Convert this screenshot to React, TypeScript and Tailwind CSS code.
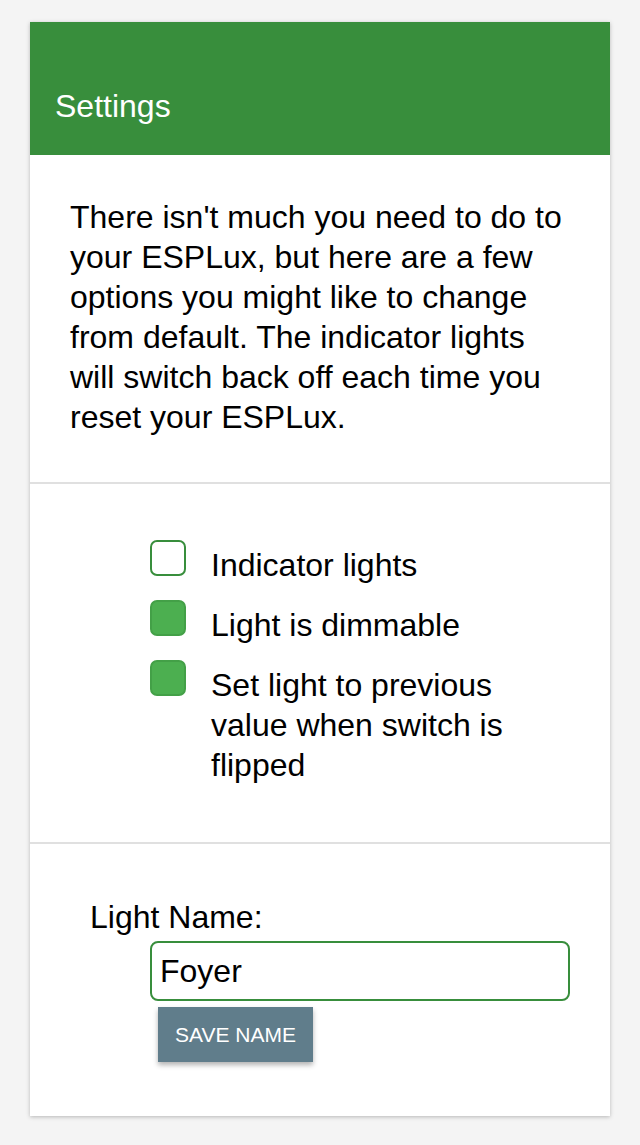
const font = { fontFamily: '"Liberation Sans", Arial, sans-serif' };

type Option = { label: string; checked: boolean };

const options: Option[] = [
  { label: 'Indicator lights', checked: false },
  { label: 'Light is dimmable', checked: true },
  { label: 'Set light to previous value when switch is flipped', checked: true },
];

function Checkbox({ checked }: { checked: boolean }) {
  return (
    <span
      className={
        checked
          ? 'mt-[-5px] block h-[36px] w-[36px] shrink-0 rounded-[7px] border-2 border-[#43a047] bg-[#4caf50]'
          : 'mt-[-5px] block h-[36px] w-[36px] shrink-0 rounded-[7px] border-2 border-[#388e3c] bg-white'
      }
    />
  );
}

export default function App() {
  return (
    <div className="min-h-[1145px] bg-[#f4f4f4] pt-[22px]" style={font}>
      <div className="mx-[30px] bg-white shadow-[0_1px_4px_rgba(0,0,0,0.25)]">
        <div className="bg-[#388e3c] pb-[29px] pl-[25px] pt-[64px] text-[32px] leading-[40px] text-white">
          Settings
        </div>

        <div className="border-b-2 border-[#e0e0e0] px-[40px] pb-[45px] pt-[42px] text-[32px] leading-[40px] text-black">
          There isn't much you need to do to your ESPLux, but here are a few options you might
          like to change from default. The indicator lights will switch back off each time you
          reset your ESPLux.
        </div>

        <div className="flex flex-col gap-[20px] border-b-2 border-[#e0e0e0] pb-[57px] pl-[120px] pt-[61px]">
          {options.map((opt) => (
            <label key={opt.label} className="flex items-start gap-[25px]">
              <Checkbox checked={opt.checked} />
              <span className="w-[300px] text-[32px] leading-[40px] text-black">{opt.label}</span>
            </label>
          ))}
        </div>

        <div className="pb-[54px] pl-[60px] pt-[53px]">
          <div className="text-[32px] leading-[40px] text-black">Light Name:</div>
          <div className="mt-[4px] pl-[60px]">
            <input
              type="text"
              defaultValue="Foyer"
              className="h-[60px] w-[420px] rounded-[8px] border-2 border-[#388e3c] bg-white px-[8px] text-[32px] text-black outline-none"
              style={font}
            />
            <button
              className="ml-[8px] mt-[6px] block h-[55px] w-[155px] bg-[#607d8b] text-[21px] uppercase text-white shadow-[0_3px_5px_rgba(0,0,0,0.3)]"
              style={font}
            >
              Save Name
            </button>
          </div>
        </div>
      </div>
    </div>
  );
}
